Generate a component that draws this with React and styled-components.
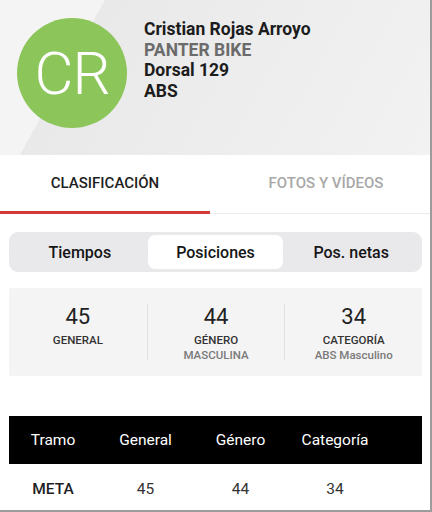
import React, { useState } from "react";
import styled, { createGlobalStyle } from "styled-components";

const GlobalStyle = createGlobalStyle`
  * { box-sizing: border-box; }
  body {
    margin: 0;
    font-family: Roboto, "Liberation Sans", Arial, sans-serif;
    background: #fff;
  }
`;

const segments = ["Tiempos", "Posiciones", "Pos. netas"];

const stats = [
  { value: 45, label: "GENERAL", sub: "" },
  { value: 44, label: "GÉNERO", sub: "MASCULINA" },
  { value: 34, label: "CATEGORÍA", sub: "ABS Masculino" },
];

const tramos = [{ name: "META", general: 45, genero: 44, categoria: 34 }];

function App() {
  const [segment, setSegment] = useState(1);
  const [tab, setTab] = useState(0);

  return (
    <Page>
      <GlobalStyle />
      <Header>
        <Avatar>CR</Avatar>
        <Info>
          <Line>Cristian Rojas Arroyo</Line>
          <Line muted>PANTER BIKE</Line>
          <Line>Dorsal 129</Line>
          <Line>ABS</Line>
        </Info>
      </Header>

      <Tabs>
        <Tab active={tab === 0} first onClick={() => setTab(0)}>
          CLASIFICACIÓN
        </Tab>
        <Tab active={tab === 1} onClick={() => setTab(1)}>
          FOTOS Y VÍDEOS
        </Tab>
      </Tabs>

      <Body>
        <Segmented>
          {segments.map((s, i) => (
            <Segment key={s} active={segment === i} onClick={() => setSegment(i)}>
              {s}
            </Segment>
          ))}
        </Segmented>

        <StatsCard>
          {stats.map((s) => (
            <Stat key={s.label}>
              <StatValue>{s.value}</StatValue>
              <StatLabel>{s.label}</StatLabel>
              <StatSub>{s.sub}</StatSub>
            </Stat>
          ))}
        </StatsCard>

        <Table>
          <HeadRow>
            <Cell>Tramo</Cell>
            <Cell>General</Cell>
            <Cell>Género</Cell>
            <Cell>Categoría</Cell>
          </HeadRow>
          {tramos.map((t) => (
            <Row key={t.name}>
              <Cell bold>{t.name}</Cell>
              <Cell>{t.general}</Cell>
              <Cell>{t.genero}</Cell>
              <Cell>{t.categoria}</Cell>
            </Row>
          ))}
        </Table>
      </Body>
    </Page>
  );
}

const Page = styled.div`
  width: 432px;
  height: 512px;
  overflow: hidden;
  border-right: 2px solid #9c9c9c;
  border-bottom: 2px solid #9c9c9c;
  background: #fff;
`;

const Header = styled.div`
  height: 155px;
  display: flex;
  align-items: flex-start;
  padding: 18px 0 0 17px;
  gap: 17px;
  background: linear-gradient(118.7deg, #f4f4f4 92px, #e9e9e9 92px, #f2f2f2 100%);
`;

const Avatar = styled.div`
  width: 110px;
  height: 110px;
  border-radius: 50%;
  background: #8cc65a;
  color: #fff;
  display: flex;
  align-items: center;
  justify-content: center;
  font-size: 60px;
  font-weight: 300;
  letter-spacing: -1px;
  flex-shrink: 0;
`;

const Info = styled.div`
  display: flex;
  flex-direction: column;
  padding-top: 1px;
`;

const Line = styled.div`
  font-size: 17.5px;
  line-height: 20.5px;
  font-weight: 700;
  color: ${(p) => (p.muted ? "#6b6b6b" : "#1c1c1c")};
`;

const Tabs = styled.div`
  display: flex;
  height: 59px;
  border-bottom: 1px solid #ececec;
`;

const Tab = styled.div`
  width: ${(p) => (p.first ? "210px" : "auto")};
  flex: ${(p) => (p.first ? "none" : "1")};
  display: flex;
  align-items: center;
  justify-content: center;
  padding-left: ${(p) => (p.first ? "0" : "12px")};
  font-size: 15px;
  font-weight: 500;
  color: ${(p) => (p.active ? "#1e1e1e" : "#a8a8a8")};
  border-bottom: 3px solid ${(p) => (p.active ? "#d43a3a" : "transparent")};
  margin-bottom: -1px;
  cursor: pointer;
`;

const Body = styled.div`
  padding: 18px 8px 0 9px;
`;

const Segmented = styled.div`
  display: grid;
  grid-template-columns: repeat(3, 1fr);
  padding: 3px;
  height: 40px;
  border-radius: 9px;
  background: #e9e9ec;
`;

const Segment = styled.div`
  display: flex;
  align-items: center;
  justify-content: center;
  border-radius: 7px;
  font-size: 16px;
  font-weight: 500;
  color: #151515;
  background: ${(p) => (p.active ? "#fff" : "transparent")};
  cursor: pointer;
`;

const StatsCard = styled.div`
  margin-top: 16px;
  display: grid;
  grid-template-columns: repeat(3, 1fr);
  align-items: center;
  height: 88px;
  background: #f4f4f4;
  border-radius: 2px;
`;

const Stat = styled.div`
  display: flex;
  flex-direction: column;
  align-items: center;
  height: 56px;
  & + & {
    border-left: 1px solid #e2e2e2;
  }
`;

const StatValue = styled.div`
  font-size: 22px;
  line-height: 26px;
  color: #222;
`;

const StatLabel = styled.div`
  margin-top: 3px;
  font-size: 11.5px;
  line-height: 15px;
  font-weight: 500;
  color: #333;
`;

const StatSub = styled.div`
  font-size: 11.5px;
  line-height: 15px;
  font-weight: 500;
  color: #7a7a7a;
`;

const Table = styled.div`
  margin-top: 40px;
`;

const columns = "88px 97px 93px 96px";

const HeadRow = styled.div`
  display: grid;
  grid-template-columns: ${columns};
  align-items: center;
  height: 48px;
  background: #000;
  color: #fff;
  font-size: 15.5px;
`;

const Row = styled.div`
  display: grid;
  grid-template-columns: ${columns};
  align-items: center;
  height: 50px;
  color: #333;
  font-size: 15.5px;
`;

const Cell = styled.div`
  text-align: center;
  font-weight: ${(p) => (p.bold ? 500 : 400)};
  color: ${(p) => (p.bold ? "#1e1e1e" : "inherit")};
`;

export default App;
